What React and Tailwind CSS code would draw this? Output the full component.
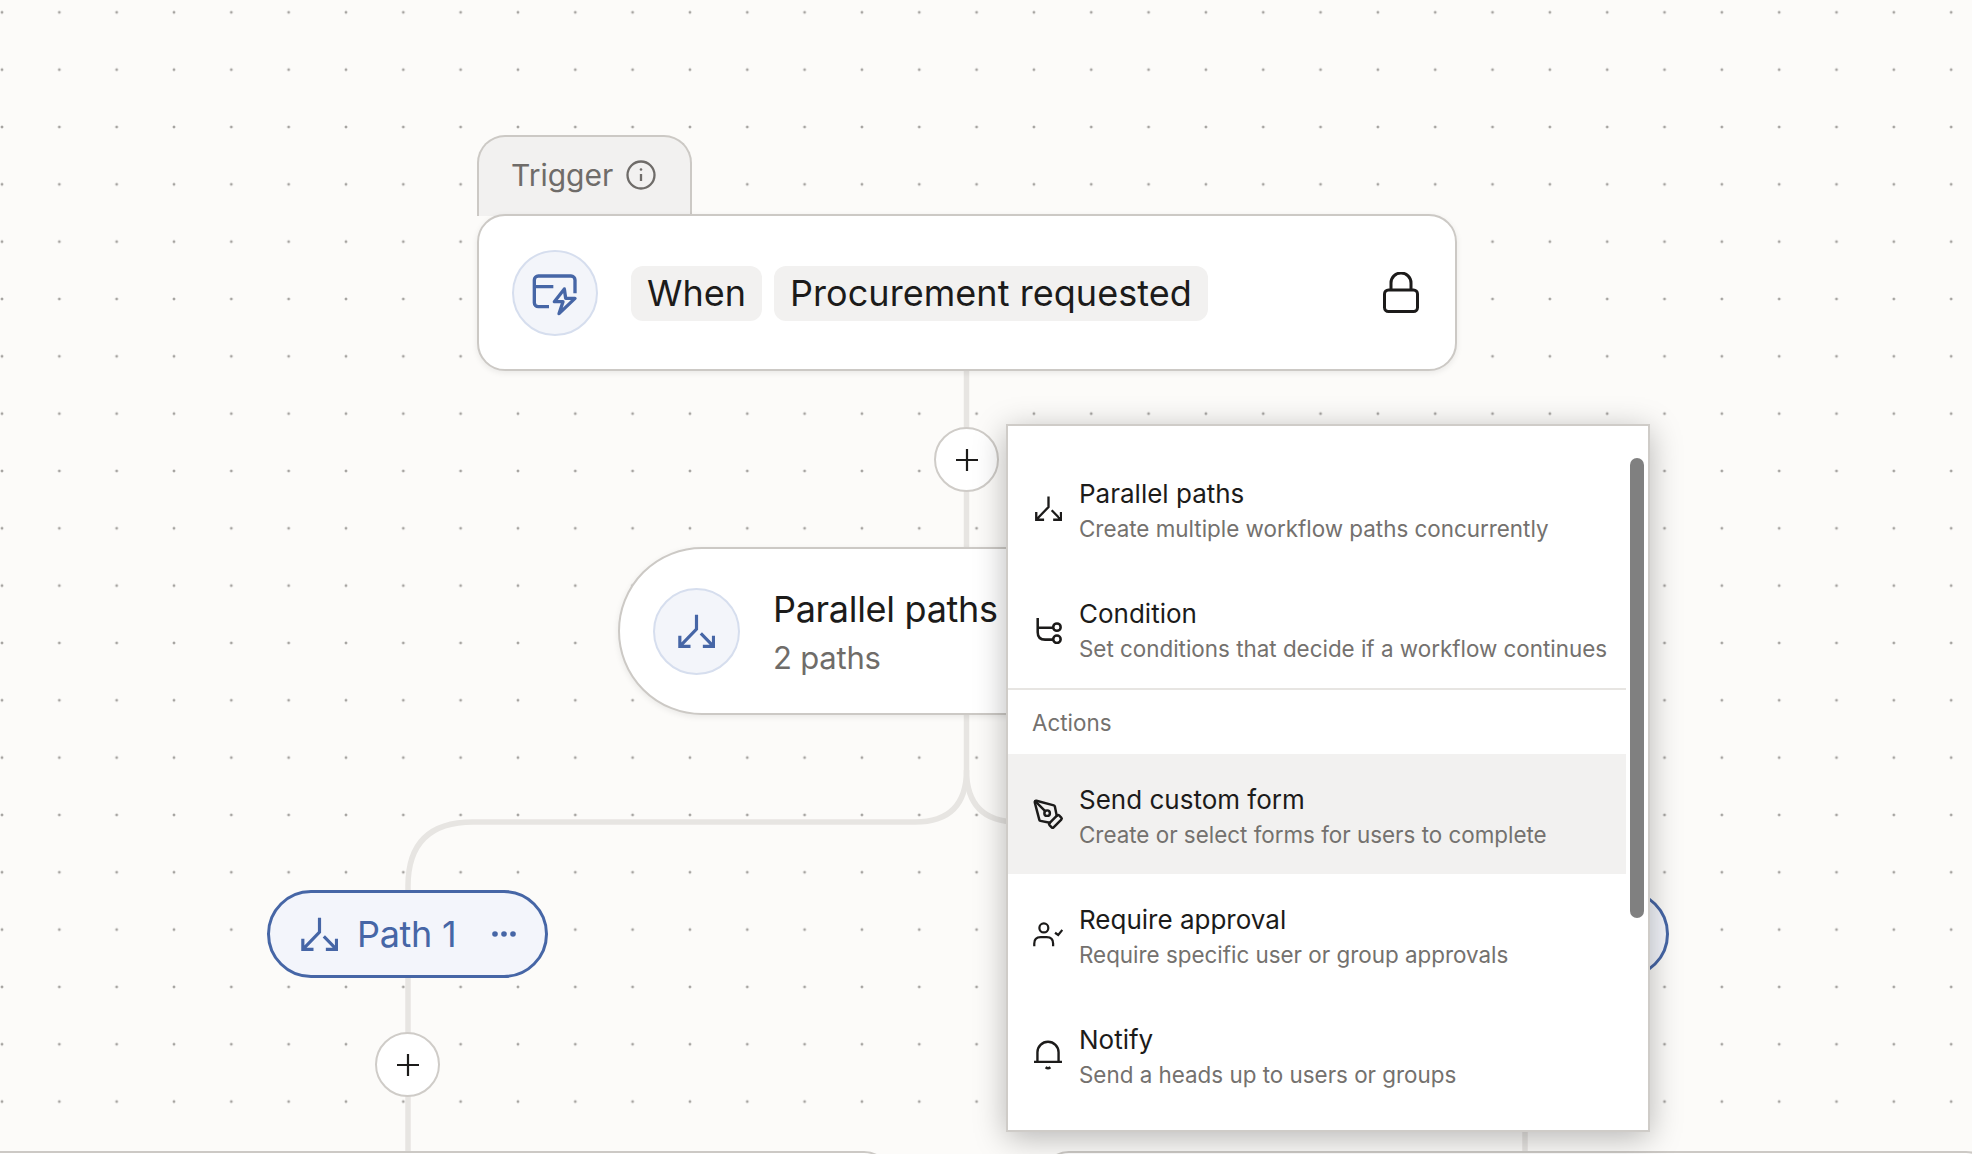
import { PenTool } from 'lucide-react'

const FONT = { fontFamily: 'Inter, "Noto Sans", sans-serif' }

const MENU_TOP = [
  { icon: 'parallel', title: 'Parallel paths', sub: 'Create multiple workflow paths concurrently' },
  { icon: 'condition', title: 'Condition', sub: 'Set conditions that decide if a workflow continues' },
]

const MENU_ACTIONS = [
  { icon: 'pen', title: 'Send custom form', sub: 'Create or select forms for users to complete', active: true, low: true },
  { icon: 'approval', title: 'Require approval', sub: 'Require specific user or group approvals', low: true },
  { icon: 'bell', title: 'Notify', sub: 'Send a heads up to users or groups', low: true },
]

function ParallelIcon({ className }) {
  return (
    <svg viewBox="0 0 110 102" fill="none" stroke="currentColor" strokeWidth="9.5" className={className}>
      <path d="M55 2V45L5 97M5 65V97H37M68 58L106 97M106 65V97H74" />
    </svg>
  )
}

function ConditionIcon() {
  return (
    <svg viewBox="0 0 80 80" fill="none" stroke="currentColor" strokeWidth="7.5" className="h-[27px] w-[27px]">
      <path d="M8 3V45Q8 67 30 67H53M8 32H53" />
      <circle cx="65" cy="30" r="11" />
      <circle cx="65" cy="66" r="11" />
    </svg>
  )
}

function ApprovalIcon() {
  return (
    <svg viewBox="0 0 94 77" fill="none" stroke="currentColor" strokeWidth="7" className="h-[27px] w-[33px]">
      <circle cx="34" cy="18" r="14" />
      <path d="M4 75V67Q4 47 24 47H43Q63 47 63 67V75" />
      <path d="M69 33L79 40L92 24" />
    </svg>
  )
}

function BellIcon() {
  return (
    <svg viewBox="0 0 88 88" fill="none" stroke="currentColor" strokeWidth="7" className="mt-[2px] h-[30px] w-[30px]">
      <path d="M3 64H85M13 64V36A31 31 0 0 1 75 36V64" />
      <path d="M37 80Q44 86 51 80" />
    </svg>
  )
}

function PlusButton({ className }) {
  return (
    <div className={`absolute flex h-[65px] w-[65px] items-center justify-center rounded-full border-2 border-[#cfccc8] bg-white ${className}`}>
      <svg viewBox="0 0 22 22" stroke="#1c1b1a" strokeWidth="2.2" className="h-[22px] w-[22px]">
        <path d="M11 0V22M0 11H22" />
      </svg>
    </div>
  )
}

function MenuItem({ icon, title, sub, active, low }) {
  return (
    <div className={`flex h-[120px] items-center ${active ? 'bg-[#f2f1f0]' : ''}`}>
      <div className="ml-[25px] mr-[16px] flex w-[30px] justify-center text-[#1c1b1a]">
        {icon === 'parallel' && <ParallelIcon className="-mt-[3px] h-[25px] w-[27px]" />}
        {icon === 'condition' && <ConditionIcon />}
        {icon === 'pen' && <PenTool size={33} strokeWidth={1.8} className="shrink-0" />}
        {icon === 'approval' && <ApprovalIcon />}
        {icon === 'bell' && <BellIcon />}
      </div>
      <div className={`whitespace-nowrap ${low ? 'pt-[7px]' : 'pt-[3px]'}`}>
        <div className="text-[26px] leading-[36px] text-[#1c1b1a]">{title}</div>
        <div className="-mt-[1px] pb-[1px] text-[22.4px] leading-[36px] text-[#74716e]">{sub}</div>
      </div>
    </div>
  )
}

export default function App() {
  return (
    <div
      style={FONT}
      className="relative h-[1154px] w-[1972px] overflow-hidden bg-[#fcfbf9] bg-[radial-gradient(circle,#a5a3a0_1.2px,transparent_1.7px)] bg-[length:57.33px_57.33px] bg-[position:-26.67px_-16.33px]"
    >
      {/* connectors */}
      <svg className="absolute left-0 top-0 h-[1154px] w-[1972px]" fill="none" stroke="#e7e5e2" strokeWidth="5.5">
        <path d="M966.5 370V770Q966.5 822 915 822H473Q408 822 408 886V1152" />
        <path d="M966.5 770Q966.5 822 1018 822H1460Q1525 822 1525 886V1152" />
      </svg>

      {/* trigger */}
      <div className="absolute left-[477px] top-[135px] flex w-[980px] flex-col">
        <div className="-mb-[2px] flex h-[81px] w-[215px] items-center rounded-t-[28px] border-2 border-b-0 border-[#ccc9c5] bg-[#f2f1f0] pb-[3px] pl-[32px] text-[#6f6c69]">
          <span className="text-[30px] leading-none">Trigger</span>
          <svg viewBox="0 0 30 30" fill="none" stroke="currentColor" strokeWidth="2.3" className="ml-[13px] h-[30px] w-[30px]">
            <circle cx="15" cy="15" r="13.5" />
            <path d="M15 14V21" />
            <circle cx="15" cy="9.5" r="1.3" fill="currentColor" stroke="none" />
          </svg>
        </div>
        <div className="flex h-[157px] items-center rounded-[28px] border-2 border-[#ccc9c5] bg-white pl-[33px] pr-[36px] shadow-[0_2px_6px_rgba(0,0,0,0.08)]">
          <div className="flex h-[86px] w-[86px] items-center justify-center rounded-full border-2 border-[#d6deee] bg-[#f3f5fa]">
            <svg viewBox="0 0 180 180" fill="none" stroke="#4666a6" strokeWidth="10" className="mt-1 h-[60px] w-[60px]">
              <path d="M150 85V45A12 12 0 0 0 138 33H40A12 12 0 0 0 28 45V113A12 12 0 0 0 40 125H72M28 65H85" />
              <path d="M118 72L88 110H114L102 146L150 100H122Z" strokeLinejoin="round" />
            </svg>
          </div>
          <span className="ml-[33px] mt-[1px] rounded-[12px] bg-[#f2f1f0] px-[16px] text-[36px] leading-[55px] text-[#1c1b1a]">When</span>
          <span className="ml-[12px] mt-[1px] rounded-[12px] bg-[#f2f1f0] px-[16px] text-[36px] leading-[55px] tracking-[0.05px] text-[#1c1b1a]">Procurement requested</span>
          <svg viewBox="0 0 36 41" fill="none" stroke="#1c1b1a" strokeWidth="3" className="ml-auto h-[41px] w-[36px]">
            <rect x="1.5" y="18" width="33" height="21.5" rx="4" />
            <path d="M8 18V11A10 10 0 0 1 28 11V18" />
          </svg>
        </div>
      </div>

      <PlusButton className="left-[934px] top-[427px]" />

      {/* parallel paths node */}
      <div className="absolute left-[618px] top-[547px] flex h-[168px] w-[697px] items-center rounded-full border-2 border-[#ccc9c5] bg-white pl-[33px] shadow-[0_2px_6px_rgba(0,0,0,0.08)]">
        <div className="flex h-[87px] w-[87px] items-center justify-center rounded-full border-2 border-[#d6deee] bg-[#f3f5fa] text-[#4666a6]">
          <ParallelIcon className="h-[34px] w-[37px]" />
        </div>
        <div className="ml-[33px]">
          <div className="text-[36px] leading-[48px] tracking-[-0.3px] text-[#1c1b1a]">Parallel paths</div>
          <div className="mt-[5px] text-[31px] leading-[40px] tracking-[-0.2px] text-[#6f6c69]">2 paths</div>
        </div>
      </div>

      {/* path 1 */}
      <div className="absolute left-[267px] top-[890px] flex h-[88px] w-[281px] items-center rounded-full border-[3px] border-[#4666a6] bg-[#f3f5fb] pl-[31px] text-[#4666a6]">
        <ParallelIcon className="h-[34px] w-[37px]" />
        <span className="ml-[19px] text-[36px] leading-none tracking-[-0.3px]">Path 1</span>
        <svg viewBox="0 0 24 6" fill="currentColor" className="ml-[36px] h-[6px] w-[24px]">
          <circle cx="3" cy="3" r="2.8" />
          <circle cx="12" cy="3" r="2.8" />
          <circle cx="21" cy="3" r="2.8" />
        </svg>
      </div>
      {/* path 2, only its end shows past the menu */}
      <div className="absolute left-[1382px] top-[890px] h-[88px] w-[287px] rounded-full border-[3px] border-[#4666a6] bg-[#f3f5fb]" />

      <PlusButton className="left-[375px] top-[1032px]" />

      {/* next step cards, cut by the window */}
      <div className="absolute left-[-61px] top-[1151px] h-[120px] w-[953px] rounded-[28px] border-2 border-[#ccc9c5] bg-white" />
      <div className="absolute left-[1041px] top-[1151px] h-[120px] w-[953px] rounded-[28px] border-2 border-[#ccc9c5] bg-white" />

      {/* add step menu */}
      <div className="absolute left-[1006px] top-[424px] h-[708px] w-[644px] overflow-hidden border-2 border-[#cfccc8] bg-white pt-[24px] shadow-[0_6px_30px_rgba(0,0,0,0.28)]">
        <div className="w-[618px]">
          {MENU_TOP.map((item) => (
            <MenuItem key={item.title} {...item} />
          ))}
          <div className="-mt-[2px] border-b-2 border-[#e7e5e2]" />
          <div className="flex h-[64px] items-center pl-[24px] pt-[2px] text-[22.4px] text-[#74716e]">Actions</div>
          {MENU_ACTIONS.map((item) => (
            <MenuItem key={item.title} {...item} />
          ))}
        </div>
        <div className="absolute right-[4px] top-[32px] h-[460px] w-[14px] rounded-full bg-[#808080]" />
      </div>
    </div>
  )
}
